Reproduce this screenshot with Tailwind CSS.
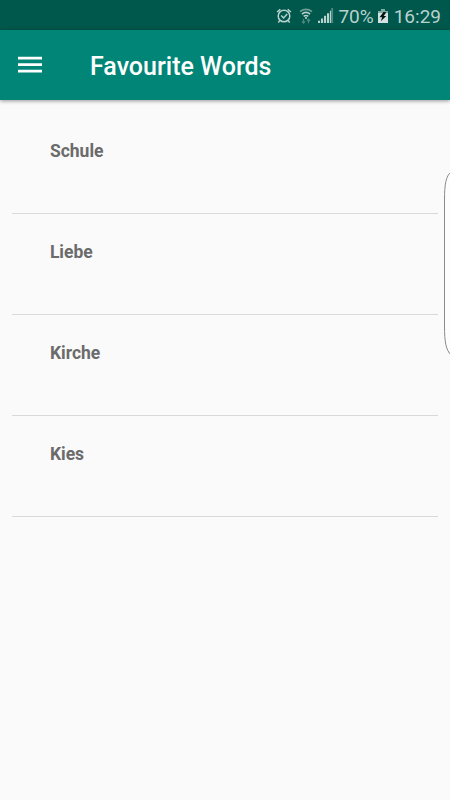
<!DOCTYPE html>
<html lang="en">
<head>
    <meta charset="UTF-8">
    <meta name="viewport" content="width=device-width, initial-scale=1.0">
    <title>Favourite Words</title>
    <script src="https://cdn.jsdelivr.net/npm/@tailwindcss/browser@4"></script>
    <style>
        body { font-family: Roboto, sans-serif; }
    </style>
</head>
<body class="bg-[#fafafa]">
    <div class="relative w-[450px] h-[800px] overflow-hidden flex flex-col">
        <!-- Status bar -->
        <div class="h-[30px] shrink-0 bg-[#00574b] text-[#b8d2ce] flex items-center justify-end pr-[9px] pt-[2px]">
            <svg class="w-[16px] h-[16px] mr-[7px]" viewBox="0 0 16 16" fill="none" stroke="currentColor" stroke-width="1.5">
                <circle cx="8" cy="8" r="5.8"/>
                <path d="M1.100 4 4.300 1.200M14.900 4 11.700 1.200M3.900 12.400 2.300 14.600M12.100 12.400l1.600 2.200M5.200 7.400l2.400 2.500 3.600-3.800"/>
            </svg>
            <svg class="w-[14px] h-[16px] mr-[5px]" viewBox="0 0 14 16" fill="none" stroke="currentColor" stroke-width="1.7">
                <path d="M1 3.600Q7-1 13 3.600" stroke="#6d9f97"/>
                <path d="M2.900 6.100Q7 2.800 11.100 6.100M4.700 8.400Q7 6.600 9.300 8.400"/>
                <circle cx="7" cy="10" r="1.1" fill="currentColor" stroke="none"/>
                <path d="M4.500 11v4M2.900 13.400l1.600 1.700 1.600-1.700M9.500 15.300v-4M7.900 12.900l1.600-1.700 1.600 1.700" stroke="#4d8980" stroke-width="1.2"/>
            </svg>
            <svg class="w-[16px] h-[16px] mr-[4px]" viewBox="0 0 16 16" fill="currentColor">
                <path d="M0 12.700h2.100V15H0zM3 10.500h2.100V15H3zM6 7.800h2.100V15H6zM9 5.200h2.100V15H9zM11.900 2.800h1.300V15h-1.300z"/>
                <path d="M13.200 0h1.900v15h-1.900z" fill="#4d8980"/>
            </svg>
            <span class="text-[19px] leading-[28px] mr-[4px] pt-px">70%</span>
            <svg class="w-[10px] h-[15px] mr-[6px]" viewBox="0 0 10 15">
                <path d="M3 0h4v2h3v3H0V2h3z" fill="#7fa9a3"/>
                <path d="M0 4h10v10H0z" fill="#d3e2e0"/>
                <path d="M5.500 3 1.500 8.200h2.700L2.800 12.200 8.300 6.900H5.700L8.300 3.300z" fill="#001512"/>
            </svg>
            <span class="text-[19px] leading-[28px] pt-px">16:29</span>
        </div>

        <!-- Toolbar -->
        <header class="h-[70px] shrink-0 bg-[#008577] flex items-center pl-[18px] shadow-[0_1px_4px_rgba(0,0,0,0.4)]">
            <svg class="w-6 h-[18px]" viewBox="0 0 24 18" fill="#fff">
                <path d="M0 .700h24v2.700H0zM0 7.200h24v2.700H0zM0 13.800h24v2.700H0z"/>
            </svg>
            <h1 class="ml-[48px] pt-[4px] text-[25px] font-medium text-white">Favourite Words</h1>
        </header>

        <!-- Word list -->
        <ul class="px-[12.400px] pt-[12.400px] text-[17.500px] font-bold text-[#6b6b6b]">
            <li class="h-[101.250px] pl-[37.500px] pt-[26.200px] leading-6 border-b border-[#d9d9d9]">Schule</li>
            <li class="h-[101.250px] pl-[37.500px] pt-[26.200px] leading-6 border-b border-[#d9d9d9]">Liebe</li>
            <li class="h-[101.250px] pl-[37.500px] pt-[26.200px] leading-6 border-b border-[#d9d9d9]">Kirche</li>
            <li class="h-[101.250px] pl-[37.500px] pt-[26.200px] leading-6 border-b border-[#d9d9d9]">Kies</li>
        </ul>

        <!-- Edge panel handle -->
        <svg class="absolute right-0 top-[170px] w-[8px] h-[186px]" viewBox="0 0 8 186" fill="#fdfdfd" stroke="#8a8a8a">
            <path d="M9 2C4 6 2.500 14 2.500 30v126C2.500 172 4 180 9 185"/>
        </svg>
    </div>
</body>
</html>
